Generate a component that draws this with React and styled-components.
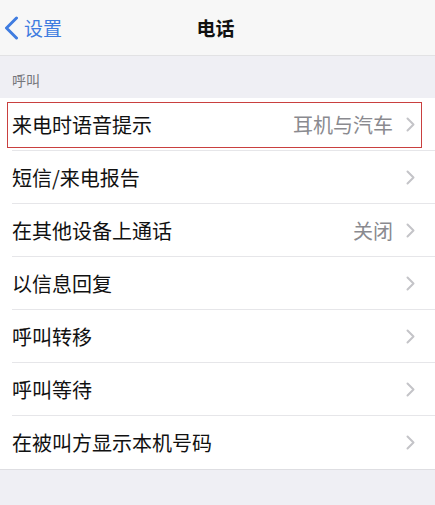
import React from "react";
import styled, { createGlobalStyle } from "styled-components";

const GlobalStyle = createGlobalStyle`
  html, body {
    margin: 0;
    padding: 0;
    background: #efeff4;
    font-family: "Noto Sans CJK SC", "Noto Sans", sans-serif;
  }
`;

const Page = styled.div`
  width: 435px;
  height: 505px;
  background: #efeff4;
  overflow: hidden;
`;

const NavBar = styled.header`
  height: 55px;
  background: #f7f7f7;
  border-bottom: 1px solid #e2e2e4;
  display: grid;
  grid-template-columns: 1fr auto 1fr;
  align-items: center;
`;

const Back = styled.div`
  display: flex;
  align-items: center;
  gap: 5px;
  padding-left: 4px;
  color: #3f7ce0;
  font-size: 19px;
`;

const Title = styled.h1`
  margin: 0 0 0 -4px;
  font-size: 19px;
  font-weight: 600;
  color: #111;
`;

const SectionHeader = styled.div`
  height: 42px;
  box-sizing: border-box;
  padding: 14px 0 0 12px;
  font-size: 14px;
  color: #75757a;
`;

const List = styled.div`
  background: #fff;
  border-bottom: 1px solid #dedee2;
`;

const Row = styled.div`
  position: relative;
  height: 53px;
  display: flex;
  align-items: center;
  padding: 0 20px 0 12px;
  box-sizing: border-box;
  &:not(:last-child)::after {
    content: "";
    position: absolute;
    left: 12px;
    right: 0;
    bottom: 0;
    height: 1px;
    background: #e6e6e9;
  }
`;

const Label = styled.span`
  flex: 1;
  font-size: 20px;
  color: #111;
`;

const Value = styled.span`
  font-size: 20px;
  color: #8a8a8f;
  margin-right: 13px;
`;

const Highlight = styled.div`
  position: absolute;
  left: 7px;
  right: 13px;
  top: 4px;
  bottom: 3px;
  border: 1px solid #c9403f;
  pointer-events: none;
`;

const Chevron = () => (
  <svg width="9" height="15" viewBox="0 0 9 15">
    <path d="M1.5 1.5 L7.5 7.5 L1.5 13.5" fill="none" stroke="#c4c4c8" strokeWidth="2" strokeLinecap="round" strokeLinejoin="round" />
  </svg>
);

const BackIcon = () => (
  <svg width="15" height="24" viewBox="0 0 15 24">
    <path d="M12.5 2 L2.5 12 L12.5 22" fill="none" stroke="#3f7ce0" strokeWidth="3" strokeLinecap="round" strokeLinejoin="round" />
  </svg>
);

const rows = [
  { label: "来电时语音提示", value: "耳机与汽车", highlight: true },
  { label: "短信/来电报告" },
  { label: "在其他设备上通话", value: "关闭" },
  { label: "以信息回复" },
  { label: "呼叫转移" },
  { label: "呼叫等待" },
  { label: "在被叫方显示本机号码" },
];

const App = () => {
  return (
    <Page>
      <GlobalStyle />
      <NavBar>
        <Back>
          <BackIcon />
          设置
        </Back>
        <Title>电话</Title>
        <div />
      </NavBar>
      <SectionHeader>呼叫</SectionHeader>
      <List>
        {rows.map((r) => (
          <Row key={r.label}>
            <Label>{r.label}</Label>
            {r.value && <Value>{r.value}</Value>}
            <Chevron />
            {r.highlight && <Highlight />}
          </Row>
        ))}
      </List>
    </Page>
  );
};

export default App;
